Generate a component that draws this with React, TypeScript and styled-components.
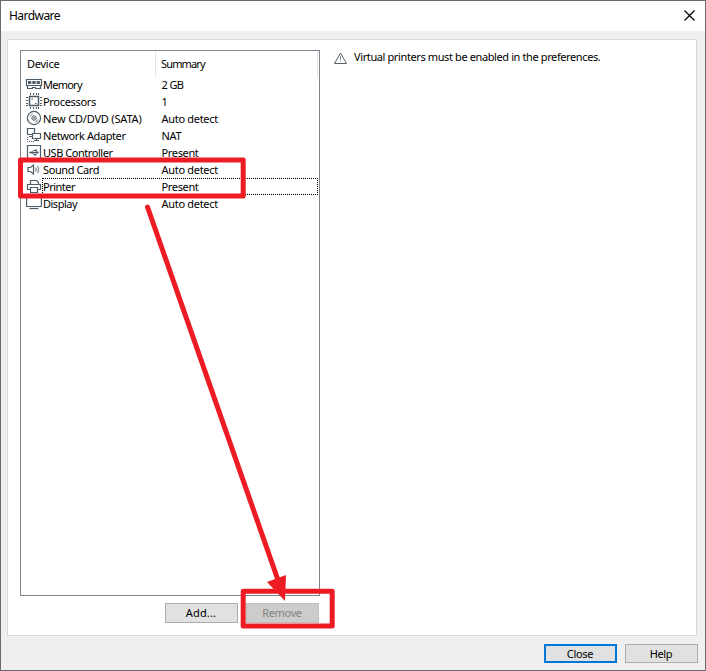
import React from "react";
import styled, { createGlobalStyle } from "styled-components";

const GlobalStyle = createGlobalStyle`
  * { box-sizing: border-box; }
  body { margin: 0; overflow: hidden; background: #efefef; }
`;

const Window = styled.div`
  position: relative;
  width: 706px;
  height: 671px;
  display: flex;
  flex-direction: column;
  background: #efefef;
  border: 1px solid #6c6a6c;
  font: 11px/17px "Noto Sans", sans-serif;
  color: #000;
`;

const TitleBar = styled.header`
  height: 30px;
  flex: none;
  display: flex;
  align-items: flex-start;
  justify-content: space-between;
  padding: 7px 10px 0 8px;
  background: #fff;
  font: 12px/16px "Noto Sans", sans-serif;
`;

const CloseIcon = styled.svg`
  width: 11px;
  height: 11px;
  margin-top: 2px;
`;

const Text = styled.span<{ $spacing?: number }>`
  display: inline-block;
  white-space: nowrap;
  letter-spacing: ${({ $spacing = 0 }) => $spacing}px;
`;

const Panel = styled.main`
  width: 690px;
  height: 597px;
  margin: 8px 0 0 6px;
  flex: none;
  display: flex;
  gap: 14px;
  padding: 10px 12px;
  border: 1px solid #d9d9d9;
  background: #fff;
`;

const DeviceColumn = styled.section`
  width: 300px;
  flex: none;
`;

const DeviceList = styled.div`
  height: 546px;
  border: 1px solid #7f848f;
  padding: 0 1px 0 5px;
`;

const ListHeader = styled.div`
  height: 25px;
  display: grid;
  grid-template-columns: 130px 162px;
`;

const HeaderCell = styled.div`
  height: 24px;
  margin-top: 1px;
  padding: 3px 0 0 1px;
  border-right: 1px solid #e5e5e5;
  & + & { padding-left: 5px; }
`;

const DeviceRow = styled.div`
  height: 17px;
  display: grid;
  grid-template-columns: 16px 276px;
`;

const DeviceCells = styled.div<{ $focused?: boolean }>`
  height: 17px;
  display: grid;
  grid-template-columns: 118.5px 1fr;
  padding-left: 1px;
  line-height: 17px;
  outline: ${({ $focused }) => ($focused ? "1px dotted #000" : "none")};
  outline-offset: -1px;
`;

const Icon = styled.svg`
  width: 16px;
  height: 17px;
  overflow: visible;
  fill: none;
  stroke: #4c5c68;
  stroke-width: 1.2;
`;

const ListActions = styled.div`
  display: flex;
  justify-content: flex-end;
  gap: 8px;
  padding: 7px 1px 0 0;
`;

const Button = styled.button<{ $kind?: "primary" | "disabled"; $height?: number }>`
  width: 73px;
  height: ${({ $height = 20 }) => $height}px;
  padding: 0 1px 1px 0;
  display: flex;
  align-items: center;
  justify-content: center;
  font: inherit;
  line-height: 15px;
  color: ${({ $kind }) => ($kind === "disabled" ? "#838383" : "#000")};
  background: ${({ $kind }) => ($kind === "disabled" ? "#cccccc" : "#e1e1e1")};
  border: ${({ $kind }) =>
    $kind === "primary" ? "2px solid #0078d7" : $kind === "disabled" ? "1px solid #bfbfbf" : "1px solid #adadad"};
`;

const Notice = styled.section`
  display: flex;
  height: 17px;
  gap: 7px;
  margin-top: -2px;
`;

const WarningIcon = styled.svg`
  width: 13px;
  height: 12px;
  margin-top: 4px;
  fill: none;
  stroke: #59636c;
`;

const Footer = styled.footer`
  display: flex;
  justify-content: flex-end;
  gap: 8px;
  padding: 8px 7px 0 0;
`;

const Annotation = styled.svg`
  position: absolute;
  left: -1px;
  top: -1px;
  width: 706px;
  height: 671px;
  pointer-events: none;
  fill: none;
  stroke: #ed1c24;
  stroke-width: 5;
  stroke-linejoin: round;
  stroke-linecap: round;
`;

const icons: Record<string, React.ReactNode> = {
  memory: (
    <>
      <path d="M.5 3.5h15v6H.5zM1.5 9.5v3h5v-1h3v1h5v-3" />
      <path d="M2 6.5h12" strokeWidth="3" strokeDasharray="3.3 1" />
    </>
  ),
  processors: (
    <>
      <path d="M3.5 3.5h9v9h-9z" strokeWidth="1.5" />
      <path d="M4.5 0v2M7.5 0v2M10.5 0v2M12.5 0v2M4.5 14v2M7.5 14v2M10.5 14v2M12.5 14v2M0 4.5h2M0 7.5h2M0 10.5h2M0 12.5h2M14 4.5h2M14 7.5h2M14 10.5h2M14 12.5h2" strokeWidth="1" />
      <path d="M5.5 6h1.5M9 10.5h1.5" />
    </>
  ),
  disc: (
    <>
      <circle cx="8" cy="8" r="6.6" />
      <circle cx="8" cy="8" r="2.2" strokeWidth="1" />
      <circle cx="8" cy="8" r=".3" />
      <path d="M4 6.6Q4.8 4.7 6.7 4M9.3 12q1.9-.7 2.6-2.4" opacity=".6" />
    </>
  ),
  network: (
    <>
      <path d="M1.5 1.5h7v6h-7zM3 9.5h4" />
      <path d="M6.5 6.5h8v5h-8z" fill="#fff" />
      <path d="M10.5 11.5v2M8 13.5h5" />
      <path d="M1.5 10v4.5H8" strokeWidth="1" strokeDasharray="1 1" />
    </>
  ),
  usb: (
    <>
      <path d="M1.5 1.5h13v13h-13z" />
      <path d="M4 8.5h7M6 8.5l1.5-2H10M6 8.5l1.5 2H9" strokeWidth="1" />
      <path d="M2.8 8.5L5.5 7v3zM9 5.5h2v2H9zM8.5 9.5h2v2h-2zM11 7l2 1.5-2 1.5z" fill="#4c5c68" stroke="none" />
    </>
  ),
  sound: (
    <>
      <path d="M2 6.5h2.5l3-2.5v9l-3-2.5H2z" />
      <path d="M9.5 6.5q1.4 2 0 4M11.5 5q2.2 3.5 0 7" opacity=".75" />
    </>
  ),
  printer: (
    <>
      <path d="M4.5 6.5v-4h6l2 2v2M4 11.5H1.5v-5h13v5H12" />
      <path d="M4.5 9.5h7v5h-7z" />
    </>
  ),
  display: (
    <>
      <path d="M.6 2.5h14.8v9H.6z" />
      <path d="M3.5 13.5h9" strokeWidth="1.2" />
    </>
  ),
};

const devices = [
  { icon: "memory", name: "Memory", spacing: -0.75, summary: "2 GB", summarySpacing: -0.6 },
  { icon: "processors", name: "Processors", spacing: -0.32, summary: "1", summarySpacing: 0 },
  { icon: "disc", name: "New CD/DVD (SATA)", spacing: -0.18, summary: "Auto detect", summarySpacing: -0.3 },
  { icon: "network", name: "Network Adapter", spacing: -0.4, summary: "NAT", summarySpacing: -0.35 },
  { icon: "usb", name: "USB Controller", spacing: -0.45, summary: "Present", summarySpacing: -0.35 },
  { icon: "sound", name: "Sound Card", spacing: -0.4, summary: "Auto detect", summarySpacing: -0.3 },
  { icon: "printer", name: "Printer", spacing: -0.5, summary: "Present", summarySpacing: -0.35, focused: true },
  { icon: "display", name: "Display", spacing: -0.5, summary: "Auto detect", summarySpacing: -0.3 },
];

export default function App() {
  return (
    <>
      <GlobalStyle />
      <Window>
        <TitleBar>
          <Text $spacing={-0.55}>Hardware</Text>
          <CloseIcon viewBox="0 0 11 11" stroke="#000" strokeWidth="1.2">
            <path d="M.5.5l10 10M10.5.5l-10 10" />
          </CloseIcon>
        </TitleBar>
        <Panel>
          <DeviceColumn>
            <DeviceList>
              <ListHeader>
                <HeaderCell><Text $spacing={-0.25}>Device</Text></HeaderCell>
                <HeaderCell><Text $spacing={-0.85}>Summary</Text></HeaderCell>
              </ListHeader>
              {devices.map((d) => (
                <DeviceRow key={d.name}>
                  <Icon viewBox="0 0 16 17">{icons[d.icon]}</Icon>
                  <DeviceCells $focused={d.focused}>
                    <Text $spacing={d.spacing}>{d.name}</Text>
                    <Text $spacing={d.summarySpacing}>{d.summary}</Text>
                  </DeviceCells>
                </DeviceRow>
              ))}
            </DeviceList>
            <ListActions>
              <Button><Text $spacing={0.15}>Add...</Text></Button>
              <Button $kind="disabled" disabled><Text $spacing={-0.35}>Remove</Text></Button>
            </ListActions>
          </DeviceColumn>
          <Notice>
            <WarningIcon viewBox="0 0 13 12">
              <path d="M6.5 1l6 10.5H.5z" />
              <path d="M6.5 4v4M6.5 9v1" opacity=".7" />
            </WarningIcon>
            <Text $spacing={-0.39}>Virtual printers must be enabled in the preferences.</Text>
          </Notice>
        </Panel>
        <Footer>
          <Button $kind="primary" $height={19}><Text $spacing={-0.3}>Close</Text></Button>
          <Button $height={19}><Text $spacing={-0.4}>Help</Text></Button>
        </Footer>
        <Annotation viewBox="0 0 706 671">
          <rect x="20.5" y="160" width="222.7" height="36" />
          <rect x="243.2" y="591.2" width="89" height="34.8" />
          <path d="M147.5 207L278 580" />
          <path d="M267 582l19-7-1 26z" fill="#ed1c24" stroke="none" />
        </Annotation>
      </Window>
    </>
  );
}
